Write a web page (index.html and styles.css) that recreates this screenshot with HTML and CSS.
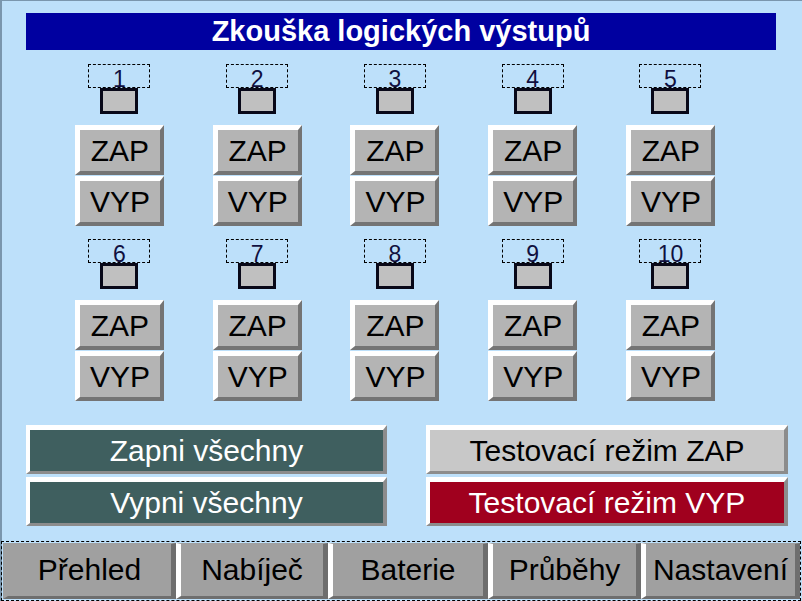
FILE: index.html
```html
<!DOCTYPE html>
<html>
<head>
    <meta charset="utf-8">
    <title>Zkouška logických výstupů</title>
    <link rel="stylesheet" href="styles.css">
</head>
<body>
    <div class="screen">
        <h1 class="title">Zkouška logických výstupů</h1>

        <div class="outputs">
            <div class="output"><div class="num">1</div><div class="lamp"></div><button class="btn">ZAP</button><button class="btn">VYP</button></div>
            <div class="output"><div class="num">2</div><div class="lamp"></div><button class="btn">ZAP</button><button class="btn">VYP</button></div>
            <div class="output"><div class="num">3</div><div class="lamp"></div><button class="btn">ZAP</button><button class="btn">VYP</button></div>
            <div class="output"><div class="num">4</div><div class="lamp"></div><button class="btn">ZAP</button><button class="btn">VYP</button></div>
            <div class="output"><div class="num">5</div><div class="lamp"></div><button class="btn">ZAP</button><button class="btn">VYP</button></div>
            <div class="output"><div class="num">6</div><div class="lamp"></div><button class="btn">ZAP</button><button class="btn">VYP</button></div>
            <div class="output"><div class="num">7</div><div class="lamp"></div><button class="btn">ZAP</button><button class="btn">VYP</button></div>
            <div class="output"><div class="num">8</div><div class="lamp"></div><button class="btn">ZAP</button><button class="btn">VYP</button></div>
            <div class="output"><div class="num">9</div><div class="lamp"></div><button class="btn">ZAP</button><button class="btn">VYP</button></div>
            <div class="output"><div class="num">10</div><div class="lamp"></div><button class="btn">ZAP</button><button class="btn">VYP</button></div>
        </div>

        <div class="actions">
            <button class="wide dark">Zapni všechny</button>
            <button class="wide light">Testovací režim ZAP</button>
            <button class="wide dark">Vypni všechny</button>
            <button class="wide red">Testovací režim VYP</button>
        </div>

        <div class="nav">
            <button class="tab">Přehled</button>
            <button class="tab">Nabíječ</button>
            <button class="tab">Baterie</button>
            <button class="tab">Průběhy</button>
            <button class="tab">Nastavení</button>
        </div>
    </div>
</body>
</html>
```

FILE: styles.css
```css
body {
    margin: 0;
    background: #bde0fa;
    font-family: "Liberation Sans", Arial, sans-serif;
}

.screen {
    width: 802px;
    height: 601px;
    background: #bde0fa;
    box-shadow: inset 2px 1px 0 #7a96ad;
    overflow: hidden;
    display: flex;
    flex-direction: column;
}

.title {
    margin: 13px 26px 0 26px;
    height: 37px;
    background: #0000a0;
    color: #fff;
    font-size: 29px;
    font-weight: bold;
    line-height: 37px;
    text-align: center;
}

.outputs {
    display: grid;
    grid-template-columns: repeat(5, 137.75px);
    row-gap: 12px;
    margin: 14px 0 0 50.6px;
}

.output {
    display: flex;
    flex-direction: column;
    align-items: center;
}

.num {
    box-sizing: border-box;
    width: 62px;
    height: 24px;
    padding-top: 1px;
    border: 1px dashed #000;
    color: #101040;
    font-size: 23px;
    line-height: 26px;
    text-align: center;
}

.lamp {
    box-sizing: border-box;
    width: 38px;
    height: 26px;
    background: #c0c0c0;
    border: 3px solid #080818;
    margin-bottom: 11px;
}

.btn {
    box-sizing: border-box;
    width: 89px;
    height: 50px;
    margin-bottom: 1px;
    padding: 0;
    background: #b4b4b4;
    border-style: solid;
    border-width: 5px 4px 4px 5px;
    border-color: #fff #747474 #747474 #fff;
    color: #000;
    font-family: "Liberation Sans", Arial, sans-serif;
    font-size: 30px;
    line-height: 40px;
}

.actions {
    display: grid;
    grid-template-columns: 361px 362px;
    column-gap: 39px;
    row-gap: 3px;
    margin: 23px 0 0 26px;
}

.wide {
    box-sizing: border-box;
    height: 49px;
    padding: 0;
    border-style: solid;
    border-width: 5px 4px 3px 4px;
    border-color: #fff #8c8c8c #8c8c8c #fff;
    font-family: "Liberation Sans", Arial, sans-serif;
    font-size: 30px;
    line-height: 40px;
}

.dark {
    background: #3f5f5f;
    color: #fff;
}

.light {
    background: #c8c8c8;
    color: #000;
}

.red {
    background: #a0001e;
    color: #fff;
}

.nav {
    display: grid;
    grid-template-columns: 173px 152px 160px 153px 159px;
    margin: 15px 0 0 1px;
    width: 800px;
    height: 62px;
    box-sizing: border-box;
    border: 1px dashed #000;
    padding: 1px 0 1px 1px;
}

.tab {
    padding: 0;
    background: #a0a0a0;
    border-style: solid;
    border-width: 1px 5px 3px 5px;
    border-color: #a0a0a0 #6e6e6e #6e6e6e #fff;
    color: #000;
    font-family: "Liberation Sans", Arial, sans-serif;
    font-size: 30px;
    line-height: 40px;
}

.tab:first-child {
    border-left-color: #a0a0a0;
}
```
